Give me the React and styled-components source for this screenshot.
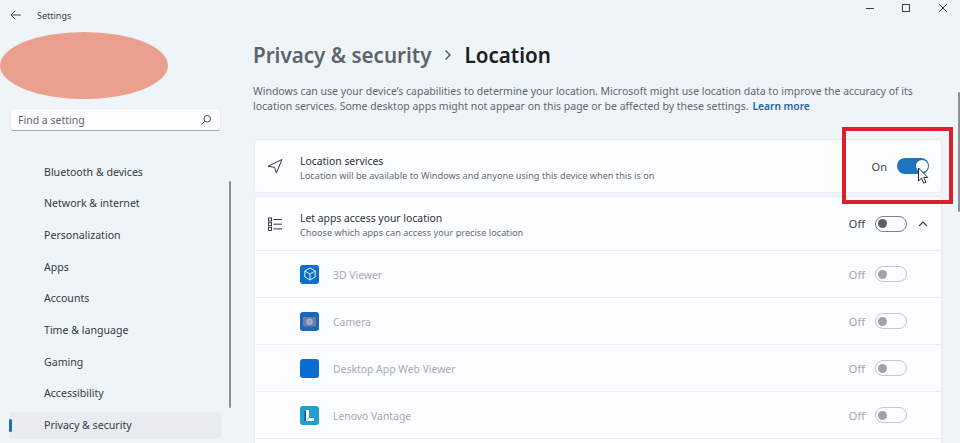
import React from 'react';
import styled, { createGlobalStyle } from 'styled-components';

const Global = createGlobalStyle`
  html, body { margin: 0; padding: 0; background: #eff4f9; }
  * { box-sizing: border-box; }
`;

const Page = styled.div`
  position: relative;
  width: 960px;
  height: 443px;
  overflow: hidden;
  display: flex;
  background: #eff4f9;
  font-family: "Noto Sans", "Open Sans", sans-serif;
  color: #1f2328;
`;

const Sidebar = styled.aside`
  position: relative;
  width: 240px;
  flex: none;
  display: flex;
  flex-direction: column;
`;

const TitleBar = styled.div`
  height: 32px;
  display: flex;
  align-items: center;
  padding: 0 0 2px 10px;
  gap: 15px;
  font-size: 9px;
  color: #3a4047;
`;

const Avatar = styled.div`
  width: 168px;
  height: 67px;
  border-radius: 50%;
  background: #eb9f8f;
  flex: none;
`;

const Search = styled.div`
  margin: 9px 0 0 10px;
  width: 211px;
  height: 23px;
  border-radius: 4px;
  background: #fbfcfe;
  border: 1px solid #e8ebef;
  border-bottom: 1px solid #a9adb2;
  display: flex;
  align-items: center;
  justify-content: space-between;
  padding: 0 8px 0 7px;
  font-size: 10.5px;
  color: #62676d;
`;

const Nav = styled.nav`
  margin-top: 27px;
  display: flex;
  flex-direction: column;
  gap: 4.7px;
  padding-left: 9px;
`;

const NavItem = styled.div`
  position: relative;
  width: 212px;
  height: 27px;
  display: flex;
  align-items: center;
  padding-left: 35px;
  font-size: 10.6px;
  color: #333a41;
  border-radius: 4px;
  background: ${p => (p.$active ? '#e8ecf1' : 'transparent')};
`;

const Indicator = styled.span`
  position: absolute;
  left: 0;
  top: 7px;
  width: 3px;
  height: 13px;
  border-radius: 2px;
  background: #1f6cb0;
`;

const Thumb = styled.div`
  position: absolute;
  border-radius: 2px;
  background: #8b9096;
  width: 2px;
  left: ${p => p.$left}px;
  top: ${p => p.$top}px;
  height: ${p => p.$height}px;
`;

const Main = styled.main`
  flex: 1;
  min-width: 0;
  padding: 41px 18px 0 13px;
  display: flex;
  flex-direction: column;
`;

const Heading = styled.h1`
  margin: 0;
  height: 28px;
  display: flex;
  align-items: center;
  gap: 11.5px;
  font-size: 20.6px;
  font-weight: 600;
  line-height: 28px;
  color: #1c2025;
`;

const Crumb = styled.span`
  color: #5d646c;
`;

const Description = styled.p`
  margin: 15px 0 0;
  width: 680px;
  font-size: 10.47px;
  line-height: 15px;
  color: #5f666d;
`;

const LearnMore = styled.a`
  margin-left: 4px;
  font-size: 10.2px;
  color: #1a659f;
  font-weight: 600;
`;

const Card = styled.section`
  margin-top: ${p => p.$top}px;
  margin-left: 1px;
  background: #fbfcfe;
  border: 1px solid #e8ecf0;
  border-radius: 4px;
`;

const Row = styled.div`
  height: ${p => p.$height}px;
  display: flex;
  align-items: center;
  padding: 0 ${p => p.$right}px 0 ${p => p.$left}px;
  border-top: ${p => (p.$line ? '1px solid #e9ecf0' : 'none')};
`;

const RowIcon = styled.span`
  width: 16px;
  height: 16px;
  flex: none;
  display: flex;
  margin-right: 17px;
  color: #33383e;
`;

const AppIcon = styled.span`
  width: 19px;
  height: 19px;
  flex: none;
  border-radius: 3px;
  margin-right: 14px;
  display: flex;
  align-items: center;
  justify-content: center;
  background: ${p => p.$bg};
  overflow: hidden;
`;

const RowText = styled.div`
  flex: 1;
  min-width: 0;
  padding-top: 3px;
  display: flex;
  flex-direction: column;
`;

const RowTitle = styled.div`
  font-size: 10.4px;
  line-height: 15px;
  color: #2d3238;
`;

const RowSub = styled.div`
  font-size: 9.2px;
  line-height: 13px;
  color: #666c73;
`;

const AppName = styled.div`
  flex: 1;
  padding-top: 2px;
  font-size: 10.4px;
  color: #a6abb1;
`;

const State = styled.span`
  font-size: 11px;
  margin-right: 10px;
  color: ${p => (p.$dim ? '#a2a6ab' : '#3b4046')};
`;

const Toggle = styled.span`
  position: relative;
  width: 32px;
  height: 16px;
  flex: none;
  border-radius: 8px;
  background: ${p => (p.$on ? '#1f74bf' : 'transparent')};
  border: ${p => (p.$on ? 'none' : `1px solid ${p.$dim ? '#c3c6ca' : '#7d8287'}`)};
`;

const Knob = styled.span`
  position: absolute;
  top: ${p => (p.$on ? 2 : 2.5)}px;
  left: ${p => (p.$on ? 19 : 2)}px;
  width: ${p => (p.$on ? 12 : 9)}px;
  height: ${p => (p.$on ? 12 : 9)}px;
  border-radius: 50%;
  background: ${p => (p.$on ? '#ffffff' : p.$dim ? '#a0a3a7' : '#5b5f64')};
`;

const Chevron = styled.span`
  display: flex;
  margin-left: 10px;
  color: #3b4046;
`;

const WindowControls = styled.div`
  position: absolute;
  top: 0;
  right: -1px;
  display: flex;
  color: #3b4046;
`;

const WindowButton = styled.span`
  width: 36.5px;
  height: 16px;
  display: flex;
  align-items: center;
  justify-content: center;
`;

const Highlight = styled.div`
  position: absolute;
  left: 842px;
  top: 127px;
  width: 111px;
  height: 77px;
  border: 4px solid #da1f2e;
`;

const Cursor = styled.svg`
  position: absolute;
  left: 917px;
  top: 167px;
`;

const Switch = ({ on, dim }) => (
  <Toggle $on={on} $dim={dim}>
    <Knob $on={on} $dim={dim} />
  </Toggle>
);

const navItems = ['Bluetooth & devices', 'Network & internet', 'Personalization', 'Apps', 'Accounts', 'Time & language', 'Gaming', 'Accessibility', 'Privacy & security'];

const apps = [
  {
    name: '3D Viewer', bg: '#0f6fc6',
    icon: (
      <svg width="14" height="14" viewBox="0 0 14 14" fill="none" stroke="#dcecfa" strokeWidth="1">
        <path d="M7 1l5.2 3v6L7 13l-5.2-3V4z" />
        <path d="M1.8 4L7 7l5.2-3M7 7v6" />
      </svg>
    ),
  },
  {
    name: 'Camera', bg: '#1a68bd',
    icon: (
      <svg width="17" height="17" viewBox="0 0 17 17">
        <rect x="2" y="4" width="13" height="9.5" rx="1" fill="#6e8095" />
        <circle cx="8.5" cy="8.7" r="3.2" fill="#a9b3e6" />
        <circle cx="8.5" cy="8.7" r="1.9" fill="#8f9de0" />
      </svg>
    ),
  },
  { name: 'Desktop App Web Viewer', bg: '#0a6ed1', icon: null },
  {
    name: 'Lenovo Vantage', bg: '#22a0cc',
    icon: (
      <svg width="19" height="19" viewBox="0 0 19 19">
        <path d="M6 4h3v8h5v3H6z" fill="#ffffff" />
        <path d="M6 15l3-3v-1l-3 4z" fill="#1c4f9c" />
        <path d="M4.5 5.5L6 4v11H4.5z" fill="#1c4f9c" />
      </svg>
    ),
  },
];

export default function App() {
  return (
    <Page>
      <Global />
      <Sidebar>
        <TitleBar>
          <svg width="12" height="12" viewBox="0 0 12 12" fill="none" stroke="#4a5057" strokeWidth="1">
            <path d="M11 6H1.2M5.4 1.6L1 6l4.4 4.4" />
          </svg>
          <span>Settings</span>
        </TitleBar>
        <Avatar />
        <Search>
          <span>Find a setting</span>
          <svg width="12" height="12" viewBox="0 0 12 12" fill="none" stroke="#4e5359" strokeWidth="1">
            <circle cx="7.2" cy="4.8" r="3.3" />
            <path d="M4.8 7.2L1.5 10.5" />
          </svg>
        </Search>
        <Nav>
          {navItems.map(item => {
            const active = item === 'Privacy & security';
            return (
              <NavItem key={item} $active={active}>
                {active && <Indicator />}
                {item}
              </NavItem>
            );
          })}
        </Nav>
        <Thumb $left={229} $top={181} $height={227} />
      </Sidebar>
      <Main>
        <Heading>
          <Crumb>Privacy &amp; security</Crumb>
          <svg width="10" height="12" viewBox="0 0 10 12" fill="none" stroke="#4b5157" strokeWidth="1.4">
            <path d="M2.5 1.5L7 6l-4.5 4.5" />
          </svg>
          <span>Location</span>
        </Heading>
        <Description>
          Windows can use your device’s capabilities to determine your location. Microsoft might use location data to improve the accuracy of its location services. Some desktop apps might not appear on this page or be affected by these settings.
          <LearnMore>Learn more</LearnMore>
        </Description>
        <Card $top={25}>
          <Row $height={52} $left={12} $right={12}>
            <RowIcon>
              <svg width="16" height="16" viewBox="0 0 16 16" fill="none" stroke="currentColor" strokeWidth="1" strokeLinejoin="round">
                <path d="M15 1.5L1 8.3l6.6 1 1.8 5.7z" />
              </svg>
            </RowIcon>
            <RowText>
              <RowTitle>Location services</RowTitle>
              <RowSub>Location will be available to Windows and anyone using this device when this is on</RowSub>
            </RowText>
            <State>On</State>
            <Switch on />
          </Row>
        </Card>
        <Card $top={3}>
          <Row $height={53} $left={12} $right={12}>
            <RowIcon>
              <svg width="16" height="16" viewBox="0 0 16 16" fill="none" stroke="currentColor" strokeWidth="1">
                <rect x="1.5" y="2" width="3" height="3" />
                <rect x="1.5" y="6.7" width="3" height="3" />
                <rect x="1.5" y="11.4" width="3" height="3" />
                <path d="M6.5 3.5H15M6.5 8.2H15M6.5 12.9H15" />
              </svg>
            </RowIcon>
            <RowText>
              <RowTitle>Let apps access your location</RowTitle>
              <RowSub>Choose which apps can access your precise location</RowSub>
            </RowText>
            <State>Off</State>
            <Switch />
            <Chevron>
              <svg width="12" height="12" viewBox="0 0 12 12" fill="none" stroke="currentColor" strokeWidth="1.1">
                <path d="M2 8l4-4 4 4" />
              </svg>
            </Chevron>
          </Row>
          {apps.map(app => (
            <Row key={app.name} $height={47} $left={45} $right={34} $line>
              <AppIcon $bg={app.bg}>{app.icon}</AppIcon>
              <AppName>{app.name}</AppName>
              <State $dim>Off</State>
              <Switch dim />
            </Row>
          ))}
          <Row $height={47} $left={45} $right={34} $line />
        </Card>
      </Main>
      <Thumb $left={958} $top={92} $height={120} />
      <WindowControls>
        <WindowButton>
          <svg width="10" height="10" viewBox="0 0 10 10" stroke="#3b4046"><path d="M1 5.5h8" /></svg>
        </WindowButton>
        <WindowButton>
          <svg width="10" height="10" viewBox="0 0 10 10" fill="none" stroke="#3b4046"><rect x="1.5" y="1.5" width="7" height="7" /></svg>
        </WindowButton>
        <WindowButton>
          <svg width="10" height="10" viewBox="0 0 10 10" stroke="#3b4046"><path d="M1 1l8 8M9 1L1 9" /></svg>
        </WindowButton>
      </WindowControls>
      <Highlight />
      <Cursor width="12" height="18" viewBox="0 0 12 18">
        <path d="M1.5 1v13l3-2.8 2.2 5 2.2-1-2.2-4.8h4z" fill="#ffffff" stroke="#23272b" strokeWidth="1" />
      </Cursor>
    </Page>
  );
}
